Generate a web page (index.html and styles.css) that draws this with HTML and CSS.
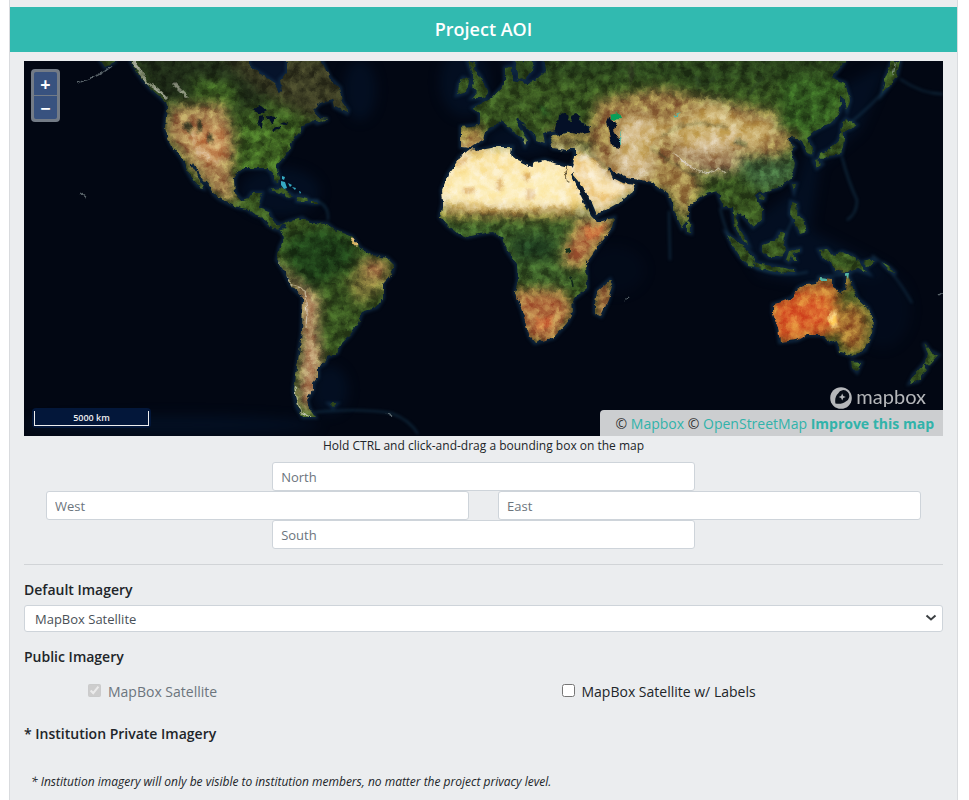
FILE: index.html
```html
<!DOCTYPE html>
<html lang="en">
<head>
<meta charset="utf-8">
<meta name="viewport" content="width=device-width, initial-scale=1">
<title>Project AOI</title>
<link rel="stylesheet" href="styles.css">
</head>
<body>
<main class="card">
  <h2 class="card-header">Project AOI</h2>
  <div class="card-body">
    <div class="map">
      <svg class="map-canvas" viewBox="24 61 919 375" preserveAspectRatio="xMidYMid slice" role="img" aria-label="World satellite map">
        <defs>
          <filter id="coast" x="0" y="0" width="1" height="1" color-interpolation-filters="sRGB">
            <feTurbulence type="fractalNoise" baseFrequency="0.16" numOctaves="3" seed="4" result="n"/>
            <feDisplacementMap in="SourceGraphic" in2="n" scale="5" xChannelSelector="R" yChannelSelector="G" result="d"/>
            <feGaussianBlur in="d" stdDeviation="0.5"/>
          </filter>
          <filter id="terrain" x="0" y="0" width="1" height="1" color-interpolation-filters="sRGB">
            <feTurbulence type="fractalNoise" baseFrequency="0.1" numOctaves="5" seed="12"/>
            <feColorMatrix values="1.8 0 0 0 -0.45  1.8 0 0 0 -0.45  1.8 0 0 0 -0.45  0 0 0 0 1"/>
          </filter>
          <filter id="soft" x="-50%" y="-50%" width="200%" height="200%" color-interpolation-filters="sRGB"><feGaussianBlur stdDeviation="6"/></filter>
          <filter id="soft-s" x="-50%" y="-50%" width="200%" height="200%" color-interpolation-filters="sRGB"><feGaussianBlur stdDeviation="1.5"/></filter>
          <path id="land-shapes" d="M131 55L131 61 137 72 143 80 150 88 158 95 166 102 168 108 166 117 165 128 168 138 172 146 178 153 183 160 187 170 193 180 198 186 203 188 199 178 193 168 190 163 193 163 198 172 204 180 210 187 214 194 220 199 230 204 237 207 247 209 254 214 262 217 268 225 275 229 281 230 287 228 284 225 277 224 272 219 269 212 258 208 262 193 252 193 248 199 242 201 235 193 234 180 237 172 245 168 257 168 267 168 272 173 275 182 278 183 279 177 276 166 283 158 290 148 292 140 300 132 303 125 315 120 317 123 328 119 320 118 313 110 320 103 333 99 335 107 347 113 348 110 342 102 340 88 330 78 322 62 322 55 287 55 287 73 280 80 282 90 279 93 275 83 263 75 250 67 247 55Z
            M278 228L287 222 302 218 310 223 327 224 335 230 352 237 360 248 372 255 387 258 394 265 392 273 383 283 383 298 377 307 362 312 358 323 350 335 340 345 337 353 327 357 325 363 318 367 318 377 313 383 313 390 307 400 309 408 315 417 303 417 297 407 294 390 297 367 302 333 303 297 292 287 285 273 277 260 280 247 285 237Z
            M460 157L470 149 480 150 497 147 512 147 511 155 517 160 532 167 535 162 545 160 557 164 574 168 571 175 577 188 585 204 590 215 597 222 614 218 612 228 600 243 586 263 587 288 572 300 573 312 567 323 553 338 535 343 530 337 526 325 522 310 515 292 518 280 517 265 507 250 503 238 493 232 480 234 467 237 457 233 448 226 440 217 443 203 442 190 448 175Z
            M572 167L575 157 575 147 567 150 553 148 550 140 553 135 563 134 574 131 587 133 590 128 578 120 570 122 563 113 557 122 555 130 543 133 545 143 537 140 532 132 518 118 515 120 528 140 525 145 522 138 508 127 502 120 493 127 485 132 483 140 470 148 461 147 461 127 480 125 480 113 473 108 492 98 502 87 505 83 505 68 512 67 512 80 527 83 537 80 545 72 543 55 845 55 845 61 832 78 845 83 850 100 847 110 842 94 840 110 833 122 817 130 807 137 813 148 812 155 807 153 802 142 793 137 787 140 795 147 790 152 795 163 792 177 780 187 763 192 755 195 762 210 762 220 753 227 740 213 736 213 738 227 745 237 748 244 742 240 735 227 732 207 723 207 717 190 707 193 700 197 688 207 688 220 682 228 675 213 668 193 658 188 653 182 627 178 613 170 608 168 613 178 623 183 635 185 633 192 620 202 597 215 592 203 583 187 573 175Z
            M773 305L792 298 798 288 807 284 817 283 820 278 832 280 832 288 840 293 845 290 847 273 853 287 857 298 868 308 874 322 872 333 865 350 853 356 840 352 837 340 830 342 823 335 807 335 797 340 780 342 778 327 773 313Z
            M610 280L612 286 608 301 601 316 595 313 595 303 597 291Z
            M468 62L475 62 474 69 480 76 488 93 484 98 472 98 477 92 472 86 474 79Z
            M463 78L469 80 467 92 457 95 459 84Z
            M515 61L534 61 532 70 525 79 519 80 516 70Z
            M842 124L846 119 856 125 850 129 844 130 844 141 841 154 829 156 818 160 820 154 830 149 838 142 841 134Z
            M882 94L885 79 892 61 900 61 897 75 889 86Z
            M817 160L822 164 817 168 814 161Z
            M269 190L281 188 293 196 289 197 278 192ZM298 196L307 198 308 202 297 201ZM312 201L317 201 317 203 312 203Z
            M687 222L691 225 691 233 687 232Z
            M727 234L736 240 746 248 755 258 754 266 748 265 740 257 733 247Z
            M754 262L765 265 784 268 794 270 794 273 775 272 757 268Z
            M763 245L775 241 780 232 786 234 784 242 786 249 780 257 769 257 762 250Z
            M789 251L800 249 800 251 793 253 796 260 792 260 791 256 789 262 786 260Z
            M791 202L797 204 796 212 803 220 806 231 800 233 796 224 790 214ZM792 184L796 184 794 191Z
            M819 250L827 249 834 256 842 252 853 256 862 265 868 273 857 269 848 272 835 271 832 262 823 258Z
            M924 343L930 351 938 355 930 364 924 365 928 355ZM923 365L927 369 918 381 910 383 914 375Z
            M852 362L861 363 857 372 853 368Z
            M101 61L116 61 105 67ZM330 404L336 404 333 407Z
            M760 195L765 196 764 200 759 199ZM864 262L873 259 875 261 868 266ZM882 263L889 267 896 274 889 270Z"/>
          <clipPath id="land"><use href="#land-shapes"/></clipPath>
        </defs>
        <rect x="24" y="61" width="919" height="375" fill="#020713"/>
        <g filter="url(#soft)" fill="#04142b" opacity=".6">
          <ellipse cx="360" cy="90" rx="16" ry="30"/><ellipse cx="465" cy="82" rx="25" ry="35"/>
          <path d="M243 55H292V88L275 92 250 75ZM500 55H548V85H515Z" fill="#0a1b3c"/>
          <ellipse cx="330" cy="390" rx="18" ry="24"/><ellipse cx="280" cy="192" rx="40" ry="24"/>
          <path d="M735 235L795 190 812 135 845 85 890 61 860 130 820 165 810 230 890 270 840 290 760 275Z"/>
          <ellipse cx="883" cy="310" rx="28" ry="38" opacity=".5"/><ellipse cx="170" cy="425" rx="150" ry="10"/>
          <ellipse cx="520" cy="140" rx="35" ry="16"/><ellipse cx="615" cy="270" rx="30" ry="24" opacity=".4"/>
        </g>
        <g fill="none" stroke="#1b4560" stroke-width="1.5" filter="url(#soft-s)">
          <use href="#land-shapes" stroke="#12324f" stroke-width="4" opacity=".7"/>
          <path opacity=".7" d="M720 208Q728 244 748 264Q775 279 808 272M786 234L799 207M872 255Q893 269 912 303M845 127Q873 105 890 84M900 79Q922 94 943 94M842 157Q848 181 857 200Q857 214 847 220M669 211L670 260M817 277Q837 276 852 273M297 201Q330 196 328 220M315 412Q360 408 391 413Q410 420 418 434"/>
        </g>
        <g filter="url(#coast)">
          <g clip-path="url(#land)">
            <rect x="24" y="55" width="919" height="381" fill="#385520"/>
            <g filter="url(#soft)">
              <path fill="#202e18" d="M120 50H250L285 95 240 112 200 95 165 105Z"/>
              <path fill="#3b3c23" d="M220 55H345L350 115 310 120 255 88Z"/>
              <path fill="#3f6422" d="M188 79L232 83 241 105 205 106ZM240 120L305 115 280 180 235 175Z"/>
              <path fill="#a98350" d="M168 108L222 102 235 135 232 165 236 203 218 198 185 160 165 135Z"/>
              <path fill="#c9935c" d="M183 132L225 125 230 160 205 163Z"/>
              <path fill="#1f4119" d="M285 237L325 226 352 239 360 263 330 278 310 290 285 260Z"/>
              <path fill="#7d7639" d="M362 258L392 260 388 288 358 305 348 282Z"/>
              <path fill="#b0704a" d="M366 262h18v14h-18Z"/>
              <path fill="#c0926a" d="M276 260L288 274 310 290 320 300 317 330 322 358 317 398 309 414 299 400 302 340 300 297 278 270Z"/>
              <path fill="#fbe8b0" d="M455 140L580 150 588 215 552 210 498 210 430 205 432 180Z"/>
              <path fill="#f2d59c" d="M570 145L608 160 645 185 598 220 570 175Z"/>
              <path fill="#b58d45" d="M440 208H575V217H440Z"/>
              <path fill="#3c5f28" d="M430 221L575 221 570 250 587 285 550 290 510 277 500 240 440 240Z"/>
              <path fill="#203f20" d="M510 236L552 236 555 258 515 260Z"/>
              <path fill="#b97f49" d="M580 220H618L600 246 582 268 562 264 568 240Z"/>
              <path fill="#b87a45" d="M510 290L560 290 575 310 553 345 526 340Z"/>
              <path fill="#ae7745" d="M595 280h17v40h-17Z"/>
              <path fill="#a27e42" d="M458 128L484 126 485 149 458 150Z"/>
              <path fill="#2b451c" d="M490 45H850V85H700L640 80 500 80Z"/>
              <path fill="#a08048" d="M597 100L660 88 710 98 770 112 788 108 804 125 784 155 750 163 700 170 655 190 605 177 588 140 550 145 548 132 590 130Z"/>
              <path fill="#cdb271" d="M620 115L650 118 670 125 715 98 740 119 788 121 755 150 710 143 660 137 650 162 620 168Z"/>
              <path fill="#dac295" d="M624 120L650 116 653 138 625 148ZM677 141L735 131 744 144 713 152 680 150ZM616 145L655 160 645 180 615 172Z"/>
              <path fill="#a98c65" d="M671 149L745 155 739 170 707 175 680 162Z"/>
              <path fill="#a98c4e" d="M655 163L680 165 705 185 695 200 684 224 669 195 656 187Z"/>
              <path fill="#3d6238" d="M738 157L795 157 798 180 763 193 744 178Z"/>
              <path fill="#335c20" d="M783 75L848 80 835 124 803 137 777 127Z"/>
              <path fill="#d9702f" d="M768 303L800 285 837 290 838 332 793 345 768 340Z"/>
              <path fill="#aa7232" d="M844 300L869 312 870 345 844 354 838 330ZM797 276L852 276 850 290 798 290Z"/>
              <path fill="#62682b" d="M856 288L885 310 875 355 860 358 867 325Z"/>
            </g>
            <g filter="url(#soft-s)">
              <path fill="#fff5d0" d="M450 182l22 -14 20 12 23 -10 14 10 20 -13 18 5 -8 16 12 14 -30 4 -38 2 -35 -10 -18 6Z" opacity=".5"/>
              <path fill="#d6a462" d="M496 181l7 -4 -1 12 -5 2ZM524 173l7 1 -2 6 -6 0ZM462 189l12 -2 2 5 -12 3ZM455 162l11 -7 1 5 -9 8ZM526 190l8 1 0 8 -8 1Z" opacity=".6"/>
              <path fill="#fff3d4" d="M584 157l12 6 14 16 15 9 -8 6 -20 0 -8 -14Z" opacity=".6"/>
              <path fill="#dd622e" d="M778 307l15 3 20 -9 16 9 -8 12 -18 3 -18 -2Z" opacity=".6"/>
              <path fill="#ffda82" d="M832 310l5 2 1 13 -6 3 -4 -7Z"/>
              <path fill="#e07d42" d="M585 228l11 0 10 -5 -4 12 -15 4ZM535 316l9 3 10 -3 -4 12 -12 2Z" opacity=".6"/>
              <path fill="#353e25" d="M187 120l4 3 1 12 -4 -4 -5 -5ZM198 120l4 1 0 10 -4 2ZM208 132l5 3 0 8 -6 -1ZM629 61h5l-1 22 -4 5Z" opacity=".8"/>
              <path fill="#eed2aa" d="M192 134l4 -3 -1 8 3 7 8 6 15 7 -5 4 -19 -7Z" opacity=".5"/>
              <path fill="#4f5730" d="M737 138l9 5 2 5 -15 -5Z" opacity=".7"/>
              <path fill="#26491c" d="M535 103l13 5 2 8 -6 2 -4 -7Z"/>
            </g>
            <g fill="none" stroke="#f2eee4" stroke-width="1.2">
              <path d="M133 61l6 8 8 14 10 6 10 9" stroke-width="3" opacity=".55"/>
              <path d="M173 83l14 14" stroke-width="3" opacity=".4"/>
              <path d="M278 262l5 10 9 12 13 6 2 22 -1 15M295 385l1 16 5 11 10 5M673 152l10 9 11 8 14 5 10 -6 7 5" opacity=".5"/>
              <path d="M567 166l-2 5 3 12" stroke="#706340" stroke-width="1"/>
              <path d="M352 239l5 6" stroke-width="3" stroke="#e0c17c"/>
            </g>
            <g fill="none" stroke="#25371f" stroke-width="2" filter="url(#soft-s)">
              <path d="M748 95l14 -18M700 92l-5 -14 10 8 10 -10" opacity=".9"/>
              <path d="M662 137l17 -11 20 -3 28 4M652 148l21 16 28 14M510 105l8 -3 8 6M584 147l15 14 14 12" opacity=".4"/>
            </g>
            <rect x="24" y="55" width="919" height="381" filter="url(#terrain)" class="relief"/>
          </g>
          <g fill="#041027">
            <path d="M251 110L261 106 267 111 262 114ZM260 117L263 116 262 130 258 125ZM266 116L277 117 271 125ZM272 129L280 125 280 128 274 131ZM279 124L288 122 287 125Z"/>
            <path d="M608 118L616 122 614 130 621 142 620 148 611 146 609 132 606 123Z"/>
            <path d="M555 131l3 -14 6 -4 5 3 -1 4 5 1 -2 -5 5 -2 4 3 -2 4 8 5 4 6 -8 2 -14 -3 -8 3Z"/>
            <path d="M565 249l5 -1 0 5 -4 1Z" fill="#16311c"/>
            <path d="M571 276l2 11" stroke="#10251b" stroke-width="1.500"/>
          </g>
          <path fill="#079f59" d="M609 115l10 -2 2 6 -10 1Z"/>
          <g fill="#55b5a5"><path d="M620 130l2 12 -2 4ZM673 115l8 -3 -6 5ZM820 278l8 1 0 2 -8 0ZM845 273l4 0 -1 6Z"/></g>
        </g>
        <g fill="#35aac2">
          <path d="M282 176l3 1 -1 3 -2 -1ZM281 181l4 1 2 6 -3 1 -3 -4ZM288 183l4 2 -2 2ZM292 187l4 1 -1 2ZM299 191l2 1 -1 2ZM287 189l3 1"/>
        </g>
        <g fill="none" stroke="#b4c4c4" stroke-width="1.400" opacity=".5" filter="url(#coast)">
          <path d="M112 66Q99 77 77 83M50 90L34 94M80 193l6 4M387 414l5 3M893 75l3 -14M625 301l3 -3M939 295l4 -3"/>
        </g>
      </svg>
      <div class="zoom">
        <button type="button" class="zoom-btn zoom-in" title="Zoom in">+</button>
        <button type="button" class="zoom-btn zoom-out" title="Zoom out">−</button>
      </div>
      <div class="scale"><div class="scale-line">5000 km</div></div>
      <div class="logo">
        <svg class="logo-mark" viewBox="0 0 22 22" aria-hidden="true">
          <circle cx="11" cy="11" r="10.8" fill="#b5b7ba"/>
          <path d="M5.400 16.400C4.600 11.400 6 8.200 8.100 6.400A5.900 5.900 0 1 1 15.800 14.400C13.200 16.700 9 17 5.400 16.400Z" fill="#080e18"/>
          <path d="M12.200 6.400l1.100 2.500 2.500 1.100 -2.500 1.100 -1.100 2.500 -1.100 -2.500 -2.500 -1.100 2.500 -1.100Z" fill="#b5b7ba"/>
        </svg>
        <span>mapbox</span>
      </div>
      <div class="attribution">© <a href="#">Mapbox</a> © <a href="#">OpenStreetMap</a> <a href="#" class="improve">Improve this map</a></div>
    </div>
    <p class="hint">Hold CTRL and click-and-drag a bounding box on the map</p>
    <div class="bounds">
      <input class="field field-center" type="text" placeholder="North" aria-label="North">
      <div class="bounds-row">
        <input class="field" type="text" placeholder="West" aria-label="West">
        <input class="field" type="text" placeholder="East" aria-label="East">
      </div>
      <input class="field field-center" type="text" placeholder="South" aria-label="South">
    </div>
    <hr class="rule">
    <label class="title" for="default-imagery">Default Imagery</label>
    <div class="select-wrap">
      <select class="select" id="default-imagery"><option>MapBox Satellite</option></select>
      <svg class="chevron" viewBox="0 0 12 8" aria-hidden="true"><path d="M1.500 1.500L6 5.500 10.500 1.500" fill="none" stroke="#3c4043" stroke-width="2"/></svg>
    </div>
    <h3 class="title">Public Imagery</h3>
    <div class="checks">
      <div class="check check-disabled">
        <input type="checkbox" id="sat" checked disabled><label for="sat">MapBox Satellite</label>
      </div>
      <div class="check">
        <input type="checkbox" id="sat-labels"><label for="sat-labels">MapBox Satellite w/ Labels</label>
      </div>
    </div>
    <h3 class="title">* Institution Private Imagery</h3>
    <p class="note">* Institution imagery will only be visible to institution members, no matter the project privacy level.</p>
  </div>
</main>
</body>
</html>
```
FILE: styles.css
```css
* { box-sizing: border-box; }
body {
  margin: 0;
  background: #fff;
  color: #212529;
  font-family: "Open Sans", "Noto Sans", sans-serif;
  font-size: 14px;
  line-height: 24px;
}
.card {
  min-height: 100vh;
  margin: 0 11px 0 9px;
  padding-top: 7px;
  border: solid #d9dbde;
  border-width: 0 1px;
  background: #ebedef;
}
.card-header {
  margin: 0;
  padding: 10px 10px 11px;
  background: #31bab0;
  color: #fff;
  font-size: 18px;
  font-weight: 600;
  line-height: 24px;
  text-align: center;
}
.card-body { padding: 9px 14px 0; }
.map { position: relative; height: 375px; overflow: hidden; background: #020713; }
.map-canvas { display: block; width: 100%; height: 100%; }
.relief { mix-blend-mode: overlay; opacity: .4; }
.zoom {
  position: absolute;
  top: 8px;
  left: 7px;
  display: grid;
  gap: 1px;
  padding: 3px;
  border-radius: 4px;
  background: #737b86;
}
.zoom-btn {
  width: 23px;
  height: 23px;
  padding: 2px 0 0;
  border: 0;
  background: #38527f;
  color: #fff;
  font: bold 18px/21px "Open Sans", sans-serif;
}
.zoom-in { border-radius: 2px 2px 0 0; }
.zoom-out { border-radius: 0 0 2px 2px; }
.scale {
  position: absolute;
  left: 8px;
  bottom: 8px;
  padding: 2px;
  border-radius: 4px;
  background: #03173a;
}
.scale-line {
  width: 115px;
  margin-top: 1px;
  border: 1px solid #eee;
  border-top: 0;
  color: #eee;
  font-size: 9px;
  font-weight: 600;
  line-height: 14px;
  text-align: center;
}
.logo {
  position: absolute;
  right: 17px;
  bottom: 25px;
  display: flex;
  align-items: center;
  gap: 4px;
  color: #b5b7ba;
  font: 20px/24px Lato, sans-serif;
}
.logo span { margin-bottom: 3px; }
.logo-mark { width: 22px; height: 22px; }
.attribution {
  position: absolute;
  right: 0;
  bottom: 0;
  padding: 2px 9px 0 16px;
  border-radius: 4px 0 0 0;
  background: #ccced0;
  color: #333;
}
.attribution a { color: #31b3aa; text-decoration: none; }
.attribution .improve { font-weight: 700; }
.hint { margin: 0; font-size: 12px; line-height: 20px; text-align: center; }
.bounds { display: grid; justify-items: center; padding-top: 6px; }
.bounds-row { display: flex; gap: 29px; width: 100%; padding: 0 22px; }
.bounds-row .field { flex: 1; min-width: 0; }
.field {
  height: 29px;
  padding: 0 8px;
  border: 1px solid #ced4da;
  border-radius: 3px;
  background: #fff;
  color: #495057;
  font: 13px/24px "Open Sans", sans-serif;
}
.field-center { width: 46%; }
.field::placeholder { color: #6c757d; opacity: 1; }
.rule { height: 1px; margin: 15px 0 13px; border: 0; background: #d1d4d7; }
.title {
  display: block;
  margin: 0;
  font-size: 14px;
  font-weight: 600;
  line-height: 24px;
}
.select-wrap { position: relative; margin: 3px 0 13px; }
.select {
  display: block;
  width: 100%;
  height: 27px;
  padding: 1px 10px 0;
  border: 1px solid #ced4da;
  border-radius: 3px;
  appearance: none;
  background: #fff;
  color: #495057;
  font: 13px/20px "Open Sans", sans-serif;
}
.chevron { position: absolute; top: 9px; right: 6px; width: 12px; height: 8px; pointer-events: none; }
.checks { display: flex; margin: 11px -14px 18px; }
.check { display: flex; flex: 1; gap: 7px; padding-left: 78px; }
.check input { width: 13px; height: 13px; margin: 4px 0 0; }
.check-disabled { color: #6c757d; }
.note { margin: 24px 7px 0; font-size: 12px; font-style: italic; }
```
